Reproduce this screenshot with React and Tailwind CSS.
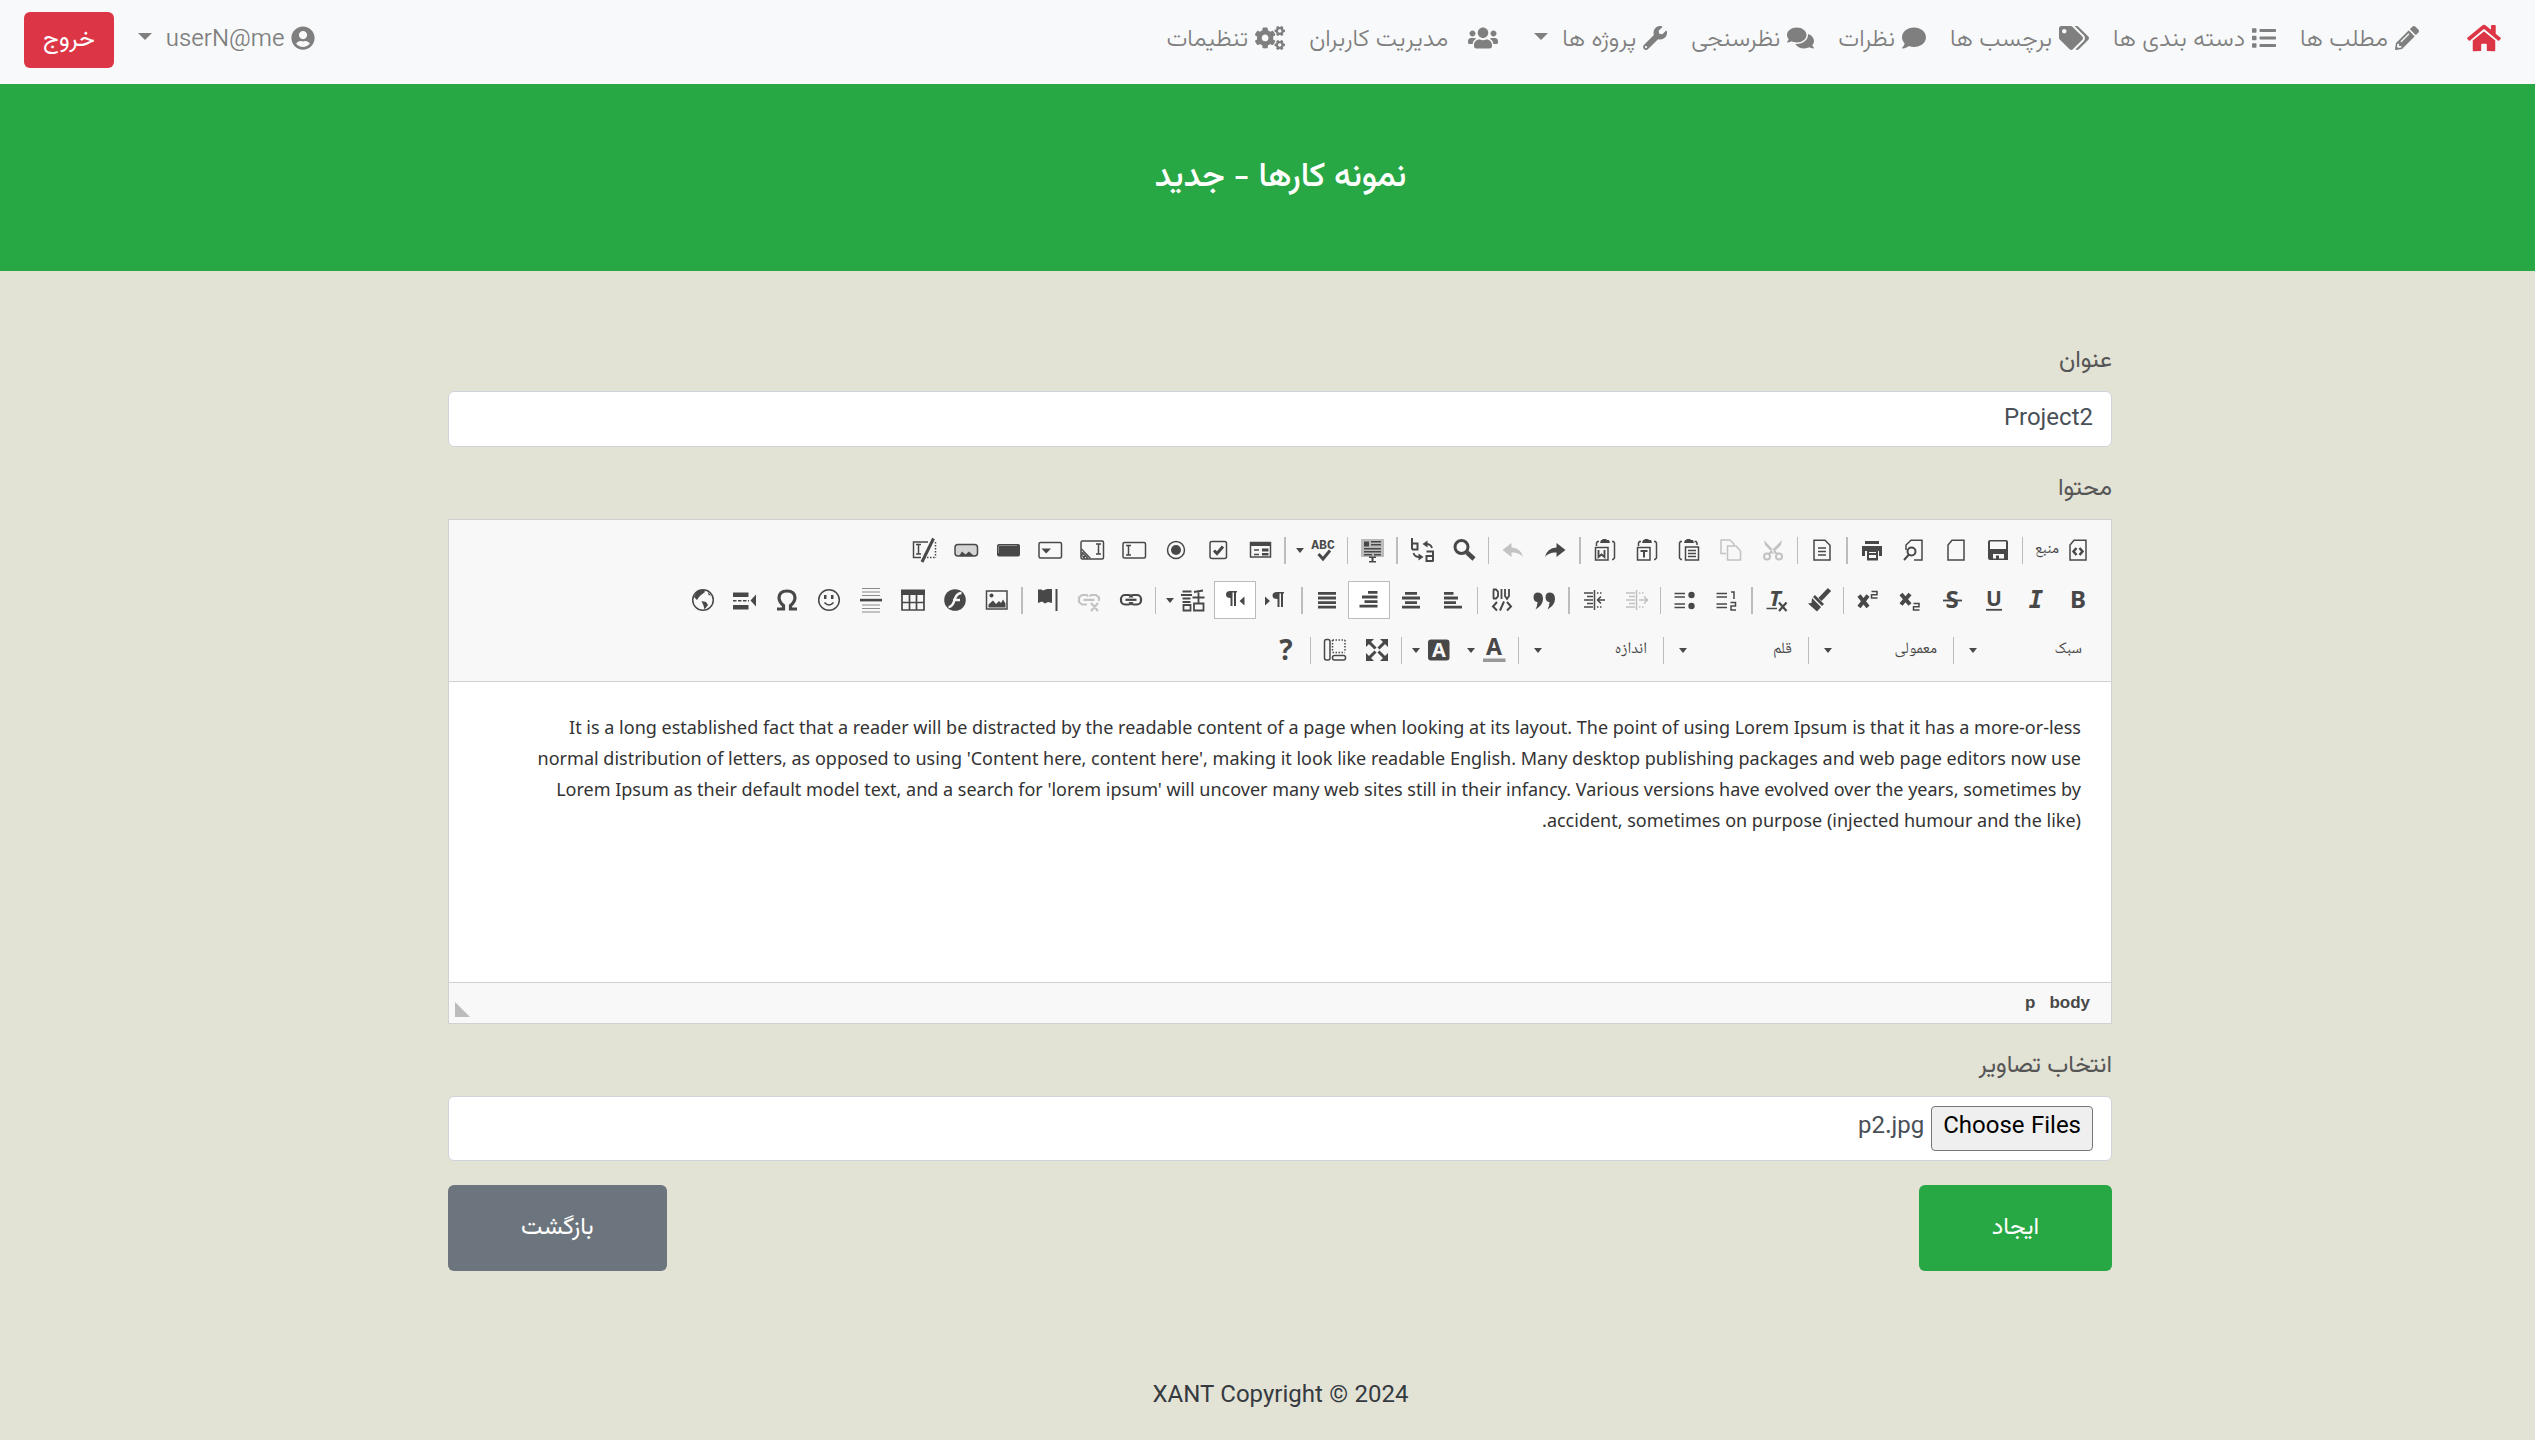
import { useEffect, useRef } from "react";
import {
  FaPencilAlt, FaList, FaTags, FaComment, FaComments, FaWrench,
  FaUsers, FaCogs, FaUserCircle, FaHome,
} from "react-icons/fa";

const INK = "#484848";

/* ---------- toolbar drawings, on a 24 x 24 grid ---------- */

const Line = (p) => <path fill="none" stroke={INK} strokeWidth="1.5" {...p} />;
const Solid = (p) => <path fill={INK} {...p} />;
const Letters = ({ children, ...p }) => (
  <text fill={INK} textAnchor="middle" fontFamily="Noto Sans, Open Sans, sans-serif" fontWeight="700" {...p}>{children}</text>
);

const Clipboard = () => (
  <>
    <Solid d="M8 2h1.5V1h4v1H16l1 3H7z" />
    <Line d="M5 3.5H3.5l-1 1.5v15l1.5 1.5H5M17.5 3.5H19L20 5v2" />
  </>
);
const ClipboardLeft = () => (
  <>
    <Solid d="M8 2h1.5V1h4v1H16l1 3H7z" />
    <Line d="M19 3.5h1.5l1 1.5v15L20 21.5h-1M6 3.5H4.5L3.5 5v3" />
  </>
);

const ICONS = {
  source: <><Line d="M8 2.2H20V22H4V7z" /><Line strokeWidth="2.5" d="M10.5 10l-3 3.5 3 3.5M13.5 10l3 3.5-3 3.5" /></>,
  save: <><Solid fillRule="evenodd" d="M4 2h16q2 0 2 2v18H4q-2 0-2-2V4q0-2 2-2zM4 3.5V11h16V3.5zM7 16v6h11v-6z" /><Solid d="M10 17.5h3V22h-3zM6.5 20.5h12V22h-12z" /></>,
  newpage: <Line d="M8 2.2H20V22H4V7z" />,
  preview: <><Line d="M4 12V7l5-4.8H20V22h-8" /><Line strokeWidth="2" d="M13.5 13.5a4 4 0 1 1-8 0 4 4 0 0 1 8 0zM6.5 17l-4.5 5" /></>,
  print: <><Solid d="M5 3h14v3H5zM2 8h20v10h-3v-5H5v5H2z" /><Solid fillRule="evenodd" d="M7 12h11v10.5H7zM9 14h7v1H9zM9 17h7v3H9z" /></>,
  templates: <><Line d="M4 2.2h11l5 5V22H4z" /><Line d="M8 10h8M8 13.5h8M8 17h8" /></>,
  cut: <><Solid d="M3 2l1 5 7 7 2 2 1-2zM21 2l-1 5-7 7-2 2-2-2z" /><Line strokeWidth="2" d="M9 18.5a3 3 0 1 1-6 0 3 3 0 0 1 6 0zM21 18.5a3 3 0 1 1-6 0 3 3 0 0 1 6 0zM8 16l3-3M16 16l-3-3" /></>,
  copy: <Line d="M7 15.5H2V2h9l4 4v2M8.5 8H17l4.5 5v9h-13z" />,
  paste: <><Clipboard /><Line d="M8.5 9h13v13h-13zM11 12.5h8M11 15.5h8M11 18.5h8" /></>,
  pastetext: <><ClipboardLeft /><Line d="M2.5 9.5H15V22H2.5z" /><Line strokeWidth="2" d="M5.5 13h7M9 13v6.5" /></>,
  pasteword: <><ClipboardLeft /><Line d="M2.5 9.5H15V22H2.5z" /><Line strokeWidth="1.8" d="M5.5 12v7l3-2.5 3 2.5v-7" /></>,
  redo: <Solid d="M22.5 12L13.5 5v4.5Q4 10 2 19q4-5 11.500-4.500V19z" />,
  undo: <Solid d="M1.500 12l9-7v4.500Q20 10 22 19q-4-5-11.500-4.500V19z" />,
  find: <><Line strokeWidth="3" d="M16 9a6.500 6.500 0 1 1-13 0 6.500 6.500 0 0 1 13 0z" /><Line strokeWidth="4.500" d="M15 14.500l7 6.500" /></>,
  replace: <><Line strokeWidth="2" d="M2 0v11.500M2 5.500h5.500v6H2M16.500 13.500H23v10M23 18h-6.500v5H23" /><Line strokeWidth="1.800" d="M22 10q-1-4-6-4M3.500 15q1 4 6 4" /><Solid d="M12.500 6l5-3.500v7zM13.500 19l-5-3.500v7z" /></>,
  selectall: <><path fill="#bcbcbc" d="M1 1h23v18H1z" /><Solid d="M4 3.500h5v5H4zM11 3h10v1.500H11zM11 6h10v1.500H11zM4 10h17v1.500H4zM4 13h17v1.500H4zM4 16h8v1.500H4zM14 16h7v1.500h-7zM9 18.500h7V20h-2.500v3H16v1.500H9V23h2.500v-3H9z" /></>,
  spell: <><Letters x="12" y="11" fontSize="13" fontFamily="Liberation Mono">ABC</Letters><Line strokeWidth="3" d="M7.500 16l4.500 5L19 12.500" /></>,
  form: <><Line d="M2.500 4.500h20v14.500h-20z" /><Solid d="M2 4h21v4H2zM14 10.500h6.500v3H14zM14 15h6.500v2.500H14z" /><Line d="M6 12h5M6 16.500h5" /></>,
  checkbox: <><rect x="4" y="3.500" width="16.500" height="17" rx="2" fill="none" stroke={INK} strokeWidth="1.500" /><Line strokeWidth="3" d="M8 12.500l3 3 6-7" /></>,
  radio: <><circle cx="12" cy="12" r="8.500" fill="none" stroke={INK} strokeWidth="1.500" /><circle cx="12" cy="12" r="5" fill={INK} /></>,
  textfield: <><rect x="1" y="4.500" width="22.500" height="15.500" rx="1.500" fill="none" stroke={INK} strokeWidth="1.500" /><Line d="M4 7.500h5M4 17h5M6.500 7.500V17" /></>,
  textarea: <><rect x="1" y="3" width="22.500" height="18" rx="1.500" fill="none" stroke={INK} strokeWidth="1.500" /><Line d="M16 6h5M16 16h5M18.500 6v10" /><Line strokeWidth="1.200" d="M1.500 11l9 9.500M1.500 14l6.500 6.500M1.500 17l3.500 3.500M1.500 17l3-3M3 20l4-4M6 20.500l2.500-2.500" /></>,
  select: <><rect x="1" y="4.500" width="22.500" height="15.500" rx="1.500" fill="none" stroke={INK} strokeWidth="1.500" /><Solid d="M3.500 10.500H13L8.200 15.500z" /></>,
  button: <><rect x="1" y="6" width="23" height="12.500" rx="2" fill={INK} /><path stroke="#8a8a8a" d="M3 7.500h18M2.500 8v7" /></>,
  imagebutton: <><rect x="1" y="6.500" width="22.500" height="11.500" rx="3" fill="#d4d4d4" stroke={INK} strokeWidth="1.500" /><Solid d="M5 18l3-4.500 3.500 3L15 13.500l5 4.500z" /></>,
  hidden: <><Line d="M16 4H1.500v15.500H9" /><Line d="M4 6.500h5M4 16h5M6.500 6.500V16" /><Line strokeWidth="3" d="M21.500 0.500L10 24" /><Line strokeDasharray="1.500 1.500" d="M23.500 4v15.500M22.500 19.500H12" /></>,

  bold: <Letters x="12" y="20" fontSize="24">B</Letters>,
  italic: <Letters x="12" y="20" fontSize="24" fontStyle="italic" fontFamily="DejaVu Sans Mono">I</Letters>,
  underline: <><Letters x="12" y="18" fontSize="21">U</Letters><Line strokeWidth="1.800" d="M4 21.800h16" /></>,
  strike: <><Letters x="12" y="20" fontSize="24">S</Letters><Line strokeWidth="1.800" d="M3 12.500h19" /></>,
  sub: <><Line strokeWidth="4" d="M3 6l9 10.500M12 6L3 16.500" /><Line d="M15.500 15.500H21v3.300h-5.500V22H21.500" /></>,
  sup: <><Line strokeWidth="4" d="M3 7.500L12 19M12 7.500L3 19" /><Line d="M15.500 3.500H21v3.300h-5.500V10H21.500" /></>,
  brush: <><Line strokeWidth="4.500" d="M22.500 1.500L13 11.500" /><Solid d="M8 7l9 9-2 2-9-9zM5 10l9 9-4 4.500-9-8 3.500-.5z" /></>,
  removeformat: <><Letters x="10" y="17.500" fontSize="22" fontStyle="italic">T</Letters><Line d="M1.500 20.500H12" /><Line strokeWidth="2.200" d="M14 14.500l7.500 8.500M21.500 14.500L14 23" /></>,
  numbered: <Line d="M1.500 5.500H12M1.500 9H12M1.500 16H12M1.500 19.500H12M16 4h3v7M15.500 14.500h5V18h-4.500v4h5" />,
  bulleted: <><Line d="M1.500 5.500H12M1.500 9H12M1.500 16H12M1.500 19.500H12" /><circle cx="18.500" cy="7" r="3.200" fill={INK} /><circle cx="18.500" cy="18" r="3.200" fill={INK} /></>,
  outdent: <><Line d="M12.500 2v20M2 5h9M5 8.500h6M2 12h9M5 15.500h6M2 19h9" /><Line strokeDasharray="1.500 1.500" d="M15 5h6M15 19h6" /><Line d="M15 12h8M20 8.500l3.500 3.500L20 15.500" /></>,
  indent: <><Line d="M12.500 2v20M2 5h9M5 8.500h6M2 12h9M5 15.500h6M2 19h9" /><Line strokeDasharray="1.500 1.500" d="M15 5h6M15 19h6" /><Line d="M15.500 12H23M19 8.500L15.500 12l3.500 3.500" /></>,
  quote: <Solid d="M6 4.500q5 0 5 6.500 0 6-7.500 10.500 2-4 2-7.500-3.500 0-4-4.500 0-5 4.500-5zM18 4.500q5 0 5 6.500 0 6-7.500 10.500 2-4 2-7.500-3.500 0-4-4.500 0-5 4.500-5z" />,
  div: <><Line strokeWidth="1.800" d="M3.500 1.500v9M3 1.500h3l2 2v5l-2 2H3M11.500 1v10M15 1v7l2 3 2-3V1" /><Line strokeWidth="2" d="M7 14l-4 4.500 4 4M17 14l4 4.500-4 4M14 13.500l-4 9" /></>,
  left: <Solid d="M3 4h9.500v2.800H3zM3 8.600h14v2.800H3zM3 13.200h12v2.800H3zM3 17.800h18v2.800H3z" />,
  center: <Solid d="M6 4h12v2.800H6zM3 8.600h18v2.800H3zM6 13.200h12v2.800H6zM3 17.800h18v2.800H3z" />,
  right: <Solid d="M11 3h9.500v2.800H11zM5 7.600h15.500v2.800H5zM7.500 12.200h13V15h-13zM2.500 16.800h18v2.800h-18z" />,
  justify: <Solid d="M3 4h18v2.800H3zM3 8.600h18v2.800H3zM3 13.200h18v2.800H3zM3 17.800h18v2.800H3z" />,
  ltr: <Solid d="M0 8.500l5 4.500-5 4.500zM12 4h7v1.500h-1V19h-2V5.500h-1.500V19h-2v-8q-5 0-5-3.500T12 4z" />,
  rtl: <Solid d="M21.500 8.500l-5 4.500 5 4.500zM7 3h7v1.500h-1V18h-2V4.500H9.500V18h-2v-8Q3 10 3 6.500 3 3 7 3z" />,
  language: <Line strokeWidth="1.800" d="M1.500 3.500h9M0 7h11M1.500 10.500h8M1.500 14h8M2.500 22.500v-5.500h7v5.500zM13 4l9-1.500M11.500 9.500h12M17.500 3v12M13 22.500v-7h9.500v7z" />,
  link: <><rect x="2" y="7" width="11.500" height="9.500" rx="4" fill="none" stroke={INK} strokeWidth="2.200" /><rect x="10.500" y="7" width="11.500" height="9.500" rx="4" fill="none" stroke={INK} strokeWidth="2.200" /><path stroke="#f8f8f8" strokeWidth="4.500" d="M9 11.800h6" /><Line strokeWidth="2.200" d="M6.500 11.800h11" /></>,
  unlink: <Line strokeWidth="2.200" d="M11 8.500L10 7H5L2 9.500v4.500L5 16.500H10M13 8.500L14 7h5l3 2.500V13M6.500 11.800h11M14 15l7 8M21 15l-7 8" />,
  anchor: <><Solid d="M3 1.500h3.500L8 2.500l4-1.500h5v14l-4-1-3 1.500-3-2-4 1.500z" /><Line strokeWidth="2" d="M21.500 1v22" /></>,
  image: <><rect x="1.500" y="3" width="20.500" height="18" fill="none" stroke={INK} strokeWidth="1.500" /><Solid d="M3.500 19.500v-3l4.500-4 3 3.500 3-3 2 2 2-3.500 2.500 4v4z" /><circle cx="6.500" cy="7.500" r="2" fill={INK} /></>,
  flash: <><circle cx="12" cy="12" r="10.800" fill={INK} /><path fill="none" stroke="#f8f8f8" strokeWidth="2.500" d="M18.500 5q-5 0-7 7t-6 7M10 12h7" /></>,
  table: <><Solid d="M0 1.500h24V7H0z" /><Line strokeWidth="1.700" d="M1 2v20h22V2M1 14.500h22M8.500 5v17M15.500 5v17" /></>,
  hr: <><Solid d="M1 10.800h22v2.600H1z" /><Line stroke="#8a8a8a" strokeWidth="1.200" d="M3 .5h18M3 4h18M3 7.500h18M3 17h18M3 20.500h18M3 24h18" /></>,
  smiley: <><circle cx="12" cy="12" r="10.300" fill="none" stroke={INK} strokeWidth="1.500" /><Solid d="M7 7h2.500v4H7zM14 7h2.500v4H14z" /><Line strokeWidth="1.700" d="M7.500 14.500q4.500 5 9 0" /></>,
  omega: <Line strokeWidth="3.200" d="M2 21h6.500v-3.500Q4 14 4 9.500 4.500 3 12 3t8 6.500q0 4.500-4.500 8V21H22" />,
  pagebreak: <><Solid d="M0 4.500h15.500V9H0zM0 17h15.500v4.500H0zM23 6.500v12l-5.500-6z" /><Line strokeDasharray="3.500 1.500" d="M0 12.800h16" /></>,
  globe: <><circle cx="12" cy="12" r="10.300" fill="none" stroke={INK} strokeWidth="1.500" /><Solid d="M5 5q3-3.500 8-3l1 2-4 3-2 2-2 3-3-3zM10.500 13l4.500 1 2 3-3.500 4.500-1-4zM17 4l3 3.500-2.500-.5z" /></>,

  textcolor: <><Letters x="12" y="17" fontSize="23">A</Letters><path fill="#999" d="M1 20.500h22.500V24H1z" /></>,
  bgcolor: <><rect x="1" y="1.500" width="21.500" height="21" rx="3" fill={INK} /><Letters x="12" y="19" fontSize="20" fill="#f8f8f8">A</Letters></>,
  maximize: <><Line strokeWidth="3" d="M4 4l6.500 6.500M20 4l-6.500 6.500M4 20l6.500-6.500M20 20l-6.500-6.500" /><Solid d="M1 1h8L1 9zM23 1v8l-8-8zM1 23v-8l8 8zM23 23h-8l8-8z" /></>,
  showblocks: <><rect x="1.500" y="1.500" width="5.500" height="20.500" rx="2" fill="none" stroke={INK} strokeWidth="1.500" /><rect x="9.500" y="17.500" width="13" height="4.500" rx="2" fill="none" stroke={INK} strokeWidth="1.500" /><Line strokeDasharray="1.500 1.500" d="M9.500 2H22M9.500 14.500H22M9.500 2v12M22 2v12" /></>,
  about: <Letters x="12" y="22" fontSize="28">?</Letters>,
};

function Caret() {
  return (
    <svg viewBox="0 0 8 5" className="w-2 shrink-0" aria-hidden="true"><path fill={INK} d="M0 0h8L4 5z" /></svg>
  );
}

function Tool({ name, label, off, on, menu, text }) {
  return (
    <button
      type="button"
      aria-label={label}
      disabled={off}
      className={
        "flex h-[38px] shrink-0 items-center gap-[7px] ps-2 " +
        (on ? "border border-[#bcbcbc] bg-white " : "border border-transparent ") +
        (menu ? "pe-[6px]" : "pe-2")
      }
    >
      <svg viewBox="0 0 24 24" className={off ? "size-6 overflow-visible opacity-30" : "size-6 overflow-visible"} aria-hidden="true">{ICONS[name]}</svg>
      {text && <span className="text-[16px] leading-5 text-[#484848] font-['Noto_Naskh_Arabic','DejaVu_Sans',sans-serif]">{text}</span>}
      {menu && <Caret />}
    </button>
  );
}

const Sep = ({ wide }) => (
  <span className={wide ? "mx-[3px] h-[27px] w-[2px] shrink-0 bg-[#bcbcbc]" : "mx-[3px] h-[27px] w-px shrink-0 bg-[#bcbcbc]"} />
);

function Combo({ label }) {
  return (
    <div className="grid w-[138px] shrink-0 items-center">
      <select
        aria-label={label}
        className="col-start-1 row-start-1 h-[38px] appearance-none bg-transparent ps-[13px] text-[16px] text-[#484848] font-['Noto_Naskh_Arabic','DejaVu_Sans',sans-serif]"
      >
        <option>{label}</option>
      </select>
      <span className="pointer-events-none col-start-1 row-start-1 justify-self-end pe-3"><Caret /></span>
    </div>
  );
}

const ROW_ONE = [
  [["source", "منبع", { text: "منبع" }]],
  [["save", "ذخیره"], ["newpage", "برگه تازه"], ["preview", "پیش نمایش"], ["print", "چاپ"]],
  [["templates", "الگوها"]],
  [["cut", "برش", { off: true }], ["copy", "کپی", { off: true }], ["paste", "چسباندن"], ["pastetext", "چسباندن متن"], ["pasteword", "چسباندن از Word"]],
  [["redo", "بازچیدن"], ["undo", "واچیدن", { off: true }]],
  [["find", "جستجو"], ["replace", "جایگزینی"]],
  [["selectall", "گزینش همه"]],
  [["spell", "بررسی املا", { menu: true }]],
  [["form", "فرم"], ["checkbox", "چک باکس"], ["radio", "دکمه رادیویی"], ["textfield", "فیلد متنی"], ["textarea", "ناحیه متنی"], ["select", "فیلد انتخاب"], ["button", "دکمه"], ["imagebutton", "دکمه تصویری"], ["hidden", "فیلد پنهان"]],
];

const ROW_TWO = [
  [["bold", "درشت"], ["italic", "خمیده"], ["underline", "زیرخط دار"], ["strike", "خط خورده"], ["sub", "زیرنویس"], ["sup", "بالانویس"]],
  [["brush", "کپی قالب"], ["removeformat", "برداشتن فرمت"]],
  [["numbered", "فهرست شماره دار"], ["bulleted", "فهرست نقطه ای"]],
  [["outdent", "کاهش تورفتگی", { off: true }], ["indent", "افزایش تورفتگی"]],
  [["quote", "نقل قول"], ["div", "ایجاد DIV"]],
  [["left", "چپ چین"], ["center", "میان چین"], ["right", "راست چین", { on: true }], ["justify", "بلوک چین"]],
  [["ltr", "چپ به راست"], ["rtl", "راست به چپ", { on: true }], ["language", "زبان", { menu: true }]],
  [["link", "پیوند"], ["unlink", "برداشتن پیوند", { off: true }], ["anchor", "لنگر"]],
  [["image", "تصویر"], ["flash", "فلش"], ["table", "جدول"], ["hr", "خط افقی"], ["smiley", "خندانک"], ["omega", "نویسه ویژه"], ["pagebreak", "شکست صفحه"], ["globe", "آی‌فریم"]],
];

function ToolRow({ groups }) {
  return (
    <div className="flex items-center">
      {groups.map((group, i) => (
        <div key={i} className="flex items-center">
          {group.map(([name, label, extra]) => <Tool key={name} name={name} label={label} {...extra} />)}
          {i < groups.length - 1 && <Sep wide={i % 2 === 1} />}
        </div>
      ))}
    </div>
  );
}

function Editor() {
  return (
    <div className="border border-[#d1d1d1] bg-white">
      <div role="toolbar" aria-label="ویرایشگر" className="flex flex-col gap-3 border-b border-[#d1d1d1] bg-[#f8f8f8] px-3 pt-[11px] pb-3">
        <ToolRow groups={ROW_ONE} />
        <ToolRow groups={ROW_TWO} />
        <div className="flex items-center ps-1">
          {["سبک", "معمولی", "قلم", "اندازه"].map((label) => (
            <div key={label} className="flex items-center"><Combo label={label} /><Sep /></div>
          ))}
          <Tool name="textcolor" label="رنگ متن" menu />
          <Tool name="bgcolor" label="رنگ پس زمینه" menu />
          <Sep />
          <Tool name="maximize" label="بیشنه کردن" />
          <Tool name="showblocks" label="نمایش بلوک ها" />
          <Sep />
          <Tool name="about" label="درباره" />
        </div>
      </div>
      <div
        role="textbox"
        aria-multiline="true"
        aria-labelledby="content-label"
        contentEditable
        suppressContentEditableWarning
        className="min-h-[300px] px-[30px] py-[30px] font-['Noto_Sans',sans-serif] text-[18px] leading-[31px] text-[#333] outline-none"
      >
        <p>
          It is a long established fact that a reader will be distracted by the readable content of a page when looking at its layout. The point of using Lorem Ipsum is that it has a more-or-less<br />
          normal distribution of letters, as opposed to using 'Content here, content here', making it look like readable English. Many desktop publishing packages and web page editors now use<br />
          Lorem Ipsum as their default model text, and a search for 'lorem ipsum' will uncover many web sites still in their infancy. Various versions have evolved over the years, sometimes by<br />
          accident, sometimes on purpose (injected humour and the like).
        </p>
      </div>
      <div className="flex h-[41px] items-center justify-between border-t border-[#d1d1d1] bg-[#f8f8f8] ps-[21px] pe-[6px] font-['Liberation_Sans',sans-serif] text-[17px] font-bold text-[#484848]">
        <div className="flex gap-[14px]">
          <button type="button">body</button>
          <button type="button">p</button>
        </div>
        <svg viewBox="0 0 15 15" className="mb-[6px] size-[15px] self-end" aria-hidden="true"><path fill="#bcbcbc" d="M0 0v15h15z" /></svg>
      </div>
    </div>
  );
}

/* ---------- page header ---------- */

const NAV = [
  { label: "مطلب ها", Icon: FaPencilAlt, size: "w-6" },
  { label: "دسته بندی ها", Icon: FaList, size: "w-6" },
  { label: "برچسب ها", Icon: FaTags, size: "w-[30px]" },
  { label: "نظرات", Icon: FaComment, size: "w-6" },
  { label: "نظرسنجی", Icon: FaComments, size: "w-[27px]" },
  { label: "پروژه ها", Icon: FaWrench, size: "w-6", menu: true },
  { label: "مدیریت کاربران", Icon: FaUsers, size: "w-[30px]", roomy: true },
  { label: "تنظیمات", Icon: FaCogs, size: "w-[30px]" },
];

const NavCaret = () => (
  <svg viewBox="0 0 14 7" className="ms-[7px] mb-2 w-[14px]" aria-hidden="true"><path fill="currentColor" d="M0 0h14L7 7z" /></svg>
);

function Navbar() {
  return (
    <nav className="flex items-center bg-[#f8f9fa] pt-3 pb-4 ps-[34px] pe-6 font-light text-[#7f7f7f]">
      <a href="#home" aria-label="خانه" className="me-9 text-[#dc3545]"><FaHome className="mb-1 h-[30px] w-[34px]" /></a>
      {NAV.map(({ label, Icon, size, menu, roomy }) => (
        <a key={label} href="#nav" className={roomy ? "ms-3 flex items-center gap-5 px-3" : "flex items-center gap-[7px] px-3"}>
          <Icon className={"mb-1 h-6 shrink-0 " + size} />
          {label}
          {menu && <NavCaret />}
        </a>
      ))}
      <button type="button" className="ms-auto flex items-center gap-[7px] px-3">
        <FaUserCircle className="mb-1 size-6" />
        userN@me
        <NavCaret />
      </button>
      <button type="button" className="ms-3 h-14 rounded-md bg-[#dc3545] px-[19px] font-normal text-white">خروج</button>
    </nav>
  );
}

/* ---------- page ---------- */

export default function App() {
  const files = useRef(null);

  useEffect(() => {
    const list = new DataTransfer();
    list.items.add(new File([""], "p2.jpg", { type: "image/jpeg" }));
    files.current.files = list.files;
  }, []);

  return (
    <div dir="rtl" className="min-h-screen bg-[#e2e2d5] font-['Vazirmatn','Roboto','DejaVu_Sans',sans-serif] text-[24px] leading-9 text-[#343a40]">
      <Navbar />
      <header className="bg-[#28a745] py-[66px] pl-[26px] text-center text-white">
        <h1 className="text-[34px] leading-[55px] font-medium">نمونه کارها - جدید</h1>
      </header>
      <main className="pt-[72px] pl-[25px]">
        <form className="mx-auto max-w-[1664px]" onSubmit={(e) => e.preventDefault()}>
          <label htmlFor="title" className="mb-3 block text-[#555]">عنوان</label>
          <input id="title" type="text" defaultValue="Project2" className="mb-6 block h-14 w-full rounded-md border border-[#ced4da] bg-white px-[18px] text-[#495057]" />
          <div id="content-label" className="mb-3 text-[#555]">محتوا</div>
          <Editor />
          <label htmlFor="files" className="mt-6 mb-3 block text-[#555]">انتخاب تصاویر</label>
          <input
            id="files"
            ref={files}
            type="file"
            multiple
            className="block w-full rounded-md border border-[#ced4da] bg-white px-[18px] py-[9px] text-[#495057] file:me-[7px] file:h-[45px] file:rounded file:border file:border-solid file:border-[#767676] file:bg-[#efefef] file:px-[11px] file:pb-1 file:text-black"
          />
          <div className="mt-6 flex justify-between">
            <button type="submit" className="h-[86px] rounded-md bg-[#28a745] px-[73px] text-white">ایجاد</button>
            <button type="button" className="h-[86px] rounded-md bg-[#6c757d] px-[73px] text-white">بازگشت</button>
          </div>
        </form>
      </main>
      <footer className="pt-[107px] pb-5 pl-[26px] text-center">XANT Copyright © 2024</footer>
    </div>
  );
}
